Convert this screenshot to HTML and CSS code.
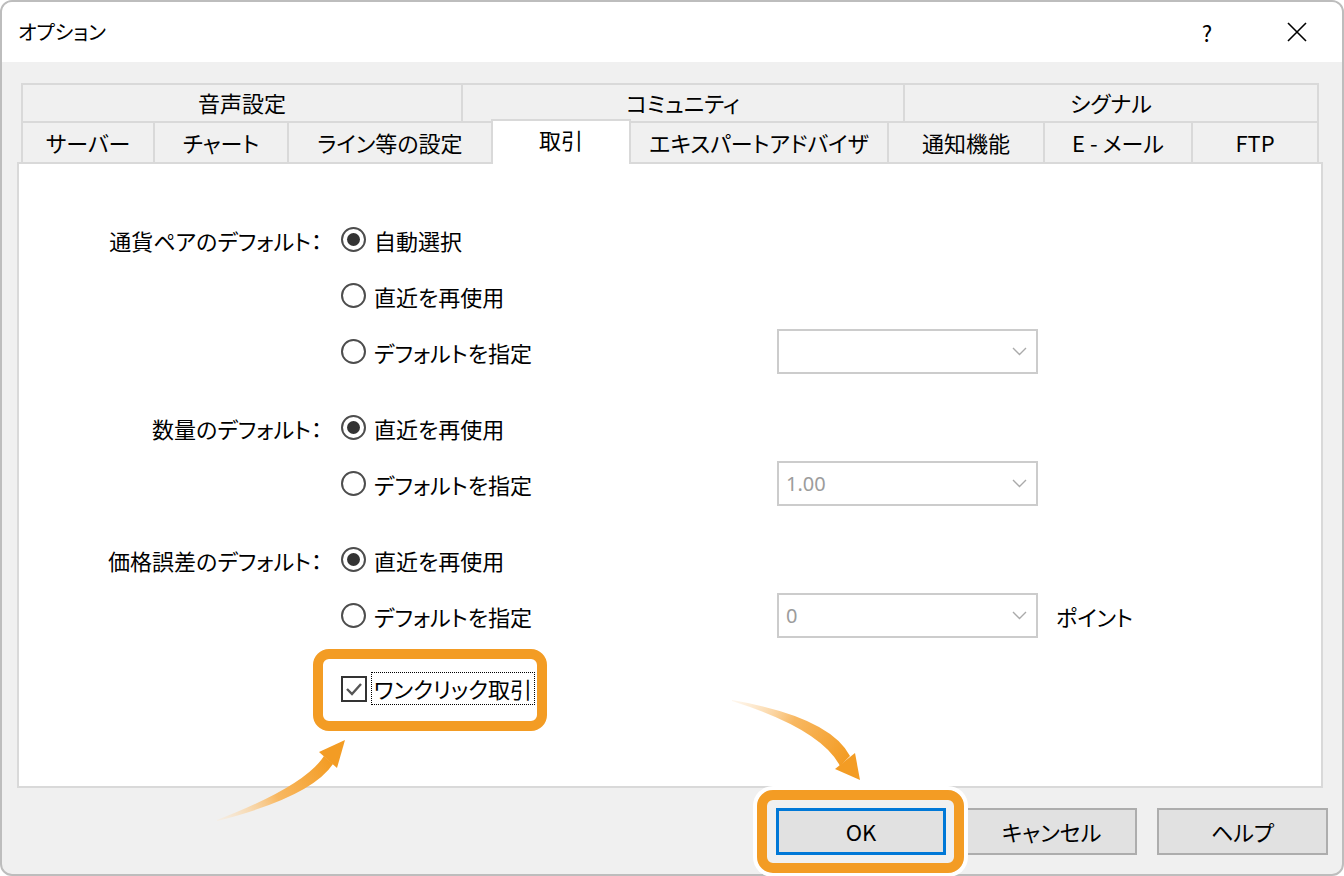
FILE: index.html
```html
<!DOCTYPE html>
<html lang="ja">
<head>
    <meta charset="UTF-8">
    <title>オプション</title>
    <link rel="stylesheet" href="styles.css">
</head>
<body>

    <div class="window">
        <div class="titlebar">
            <span class="title">オプション</span>
            <span class="caption-btn">?</span>
            <span class="caption-btn">
                <svg width="20" height="20" viewBox="0 0 20 20"><path d="M1 1 L19 19 M19 1 L1 19" stroke="#000" stroke-width="1.6" fill="none"/></svg>
            </span>
        </div>

        <div class="body">
            <div class="tabs">
                <div class="tab-row top">
                    <div class="tab">音声設定</div>
                    <div class="tab">コミュニティ</div>
                    <div class="tab">シグナル</div>
                </div>
                <div class="tab-row bottom">
                    <div class="tab">サーバー</div>
                    <div class="tab">チャート</div>
                    <div class="tab">ライン等の設定</div>
                    <div class="tab active">取引</div>
                    <div class="tab">エキスパートアドバイザ</div>
                    <div class="tab">通知機能</div>
                    <div class="tab">E - メール</div>
                    <div class="tab">FTP</div>
                </div>
            </div>

            <div class="panel">
                <div class="group">
                    <div class="row">
                        <span class="label">通貨ペアのデフォルト：</span>
                        <span class="option"><span class="radio checked"></span>自動選択</span>
                    </div>
                    <div class="row">
                        <span class="label"></span>
                        <span class="option"><span class="radio"></span>直近を再使用</span>
                    </div>
                    <div class="row">
                        <span class="label"></span>
                        <span class="option"><span class="radio"></span>デフォルトを指定</span>
                        <span class="combo"><span class="combo-text"></span><svg width="15" height="9" viewBox="0 0 15 9"><path d="M1 1 L7.5 7.5 L14 1" stroke="#aaa" stroke-width="1.4" fill="none"/></svg></span>
                    </div>
                </div>

                <div class="group">
                    <div class="row">
                        <span class="label">数量のデフォルト：</span>
                        <span class="option"><span class="radio checked"></span>直近を再使用</span>
                    </div>
                    <div class="row">
                        <span class="label"></span>
                        <span class="option"><span class="radio"></span>デフォルトを指定</span>
                        <span class="combo"><span class="combo-text">1.00</span><svg width="15" height="9" viewBox="0 0 15 9"><path d="M1 1 L7.5 7.5 L14 1" stroke="#aaa" stroke-width="1.4" fill="none"/></svg></span>
                    </div>
                </div>

                <div class="group">
                    <div class="row">
                        <span class="label">価格誤差のデフォルト：</span>
                        <span class="option"><span class="radio checked"></span>直近を再使用</span>
                    </div>
                    <div class="row">
                        <span class="label"></span>
                        <span class="option"><span class="radio"></span>デフォルトを指定</span>
                        <span class="combo"><span class="combo-text">0</span><svg width="15" height="9" viewBox="0 0 15 9"><path d="M1 1 L7.5 7.5 L14 1" stroke="#aaa" stroke-width="1.4" fill="none"/></svg></span>
                        <span class="unit">ポイント</span>
                    </div>
                </div>

                <div class="row check-row">
                    <span class="label"></span>
                    <span class="option">
                        <span class="checkbox"><svg width="22" height="22" viewBox="0 0 22 22"><path d="M4 11 L9 16 L18 6" stroke="#555" stroke-width="2.4" fill="none"/></svg></span>
                        <span class="focus">ワンクリック取引</span>
                    </span>
                </div>
            </div>

            <div class="buttons">
                <div class="btn default">OK</div>
                <div class="btn">キャンセル</div>
                <div class="btn">ヘルプ</div>
            </div>
        </div>
    </div>

    <!-- annotation marks -->
    <div class="mark mark-check"></div>
    <div class="mark mark-ok"></div>
    <svg class="arrows" width="1344" height="876" viewBox="0 0 1344 876">
        <defs>
            <linearGradient id="fade1" gradientUnits="userSpaceOnUse" x1="217" y1="820" x2="330" y2="760">
                <stop offset="0" stop-color="#fde6c8" stop-opacity="0.3"/>
                <stop offset="0.5" stop-color="#f8b862"/>
                <stop offset="1" stop-color="#f39c24"/>
            </linearGradient>
            <linearGradient id="fade2" gradientUnits="userSpaceOnUse" x1="732" y1="700" x2="845" y2="761">
                <stop offset="0" stop-color="#fde6c8" stop-opacity="0.3"/>
                <stop offset="0.5" stop-color="#f8b862"/>
                <stop offset="1" stop-color="#f39c24"/>
            </linearGradient>
        </defs>
        <path d="M217 820 Q305 786 324 756 L333 764 Q311 797 217 821 Z" fill="url(#fade1)"/>
        <polygon points="345,740 319,752 337,768" fill="#f39c24"/>
        <path d="M732 700 Q830 717 850 756 L840 766 Q821 729 732 701 Z" fill="url(#fade2)"/>
        <polygon points="860,780 835,769 855,753" fill="#f39c24"/>
    </svg>

</body>
</html>
```

FILE: styles.css
```css
body {
    margin: 0;
    background: #fff;
    font-family: "Noto Sans CJK JP", "Noto Sans", sans-serif;
    font-feature-settings: "palt";
    color: #000;
    position: relative;
}

.window {
    width: 1344px;
    height: 876px;
    box-sizing: border-box;
    border: 2px solid #bdbdbd;
    border-radius: 12px;
    overflow: hidden;
    background: #f0f0f0;
    display: flex;
    flex-direction: column;
}

.titlebar {
    height: 60px;
    flex-shrink: 0;
    background: #fff;
    display: flex;
    align-items: center;
}

.title {
    flex: 1;
    padding-left: 16px;
    padding-bottom: 2px;
    font-size: 20px;
}

.caption-btn {
    width: 90px;
    height: 60px;
    display: flex;
    align-items: center;
    justify-content: center;
    font-size: 22px;
}

.body {
    flex: 1;
    padding: 21px 14px 0 15px;
}

/* tabs */
.tabs {
    margin: 0 9px 0 4px;
}

.tab-row {
    display: grid;
}

.tab-row.top {
    grid-template-columns: 440px 442px 416px;
    height: 40px;
}

.tab-row.bottom {
    grid-template-columns: 132px 134px 204px 140px 256px 156px 148px 128px;
    height: 39px;
}

.tab {
    box-sizing: border-box;
    border: 2px solid #d9d9d9;
    border-right: none;
    display: flex;
    align-items: center;
    justify-content: center;
    font-size: 22px;
    white-space: nowrap;
    padding-bottom: 2px;
}

.tab:last-child {
    border-right: 2px solid #d9d9d9;
}

.bottom .tab {
    border-top: none;
    border-bottom: none;
    padding-bottom: 4px;
}

.bottom .tab.active {
    background: #fff;
    height: 45px;
    margin-top: -4px;
    padding-bottom: 8px;
    border-top: 2px solid #d9d9d9;
    border-right: 2px solid #d9d9d9;
    position: relative;
    z-index: 1;
}

.bottom .tab.active + .tab {
    border-left: none;
}

/* panel */
.panel {
    height: 626px;
    box-sizing: border-box;
    border: 2px solid #d9d9d9;
    background: #fff;
    margin-right: 5px;
    padding-top: 53px;
}

.group {
    margin-bottom: 31px;
}

.row {
    display: flex;
    align-items: center;
    height: 45px;
    margin-bottom: 11px;
    font-size: 22px;
}

.check-row {
    margin-top: -3px;
}

.label {
    width: 303px;
    flex-shrink: 0;
    text-align: right;
}

.option {
    width: 436px;
    flex-shrink: 0;
    margin-left: 19px;
    display: flex;
    align-items: center;
}

.radio {
    width: 25px;
    height: 25px;
    box-sizing: border-box;
    border: 2px solid #4d4d4d;
    border-radius: 50%;
    margin-right: 8px;
    display: flex;
    align-items: center;
    justify-content: center;
    flex-shrink: 0;
}

.radio.checked::after {
    content: "";
    width: 13px;
    height: 13px;
    border-radius: 50%;
    background: #333;
}

.checkbox {
    width: 26px;
    height: 26px;
    box-sizing: border-box;
    border: 2px solid #333;
    margin-right: 4px;
    display: flex;
    align-items: center;
    justify-content: center;
}

.focus {
    border: 1px dotted #000;
    padding: 0 2px;
    line-height: 31px;
}

.combo {
    width: 261px;
    height: 45px;
    box-sizing: border-box;
    border: 2px solid #ccc;
    background: #fff;
    display: flex;
    align-items: center;
    justify-content: space-between;
    padding: 0 9px 0 7px;
    font-family: "Noto Sans", sans-serif;
    font-size: 20px;
    color: #9c9c9c;
}

.unit {
    margin-left: 18px;
}

/* buttons */
.buttons {
    display: flex;
    justify-content: flex-end;
    gap: 20px;
    margin-top: 20px;
}

.btn {
    width: 171px;
    height: 47px;
    box-sizing: border-box;
    background: #e1e1e1;
    border: 2px solid #adadad;
    display: flex;
    align-items: center;
    justify-content: center;
    font-size: 22px;
    padding-bottom: 2px;
}

.btn.default {
    width: 170px;
    border: 3px solid #0078d7;
}

/* orange annotation marks */
.mark {
    position: absolute;
    box-sizing: border-box;
    border: 10px solid #f39c24;
    border-radius: 16px;
}

.mark-check {
    left: 313px;
    top: 649px;
    width: 234px;
    height: 82px;
}

.mark-ok {
    left: 757px;
    top: 790px;
    width: 207px;
    height: 83px;
    box-shadow: 0 0 0 4px #fff;
}

.arrows {
    position: absolute;
    left: 0;
    top: 0;
    pointer-events: none;
}
```
